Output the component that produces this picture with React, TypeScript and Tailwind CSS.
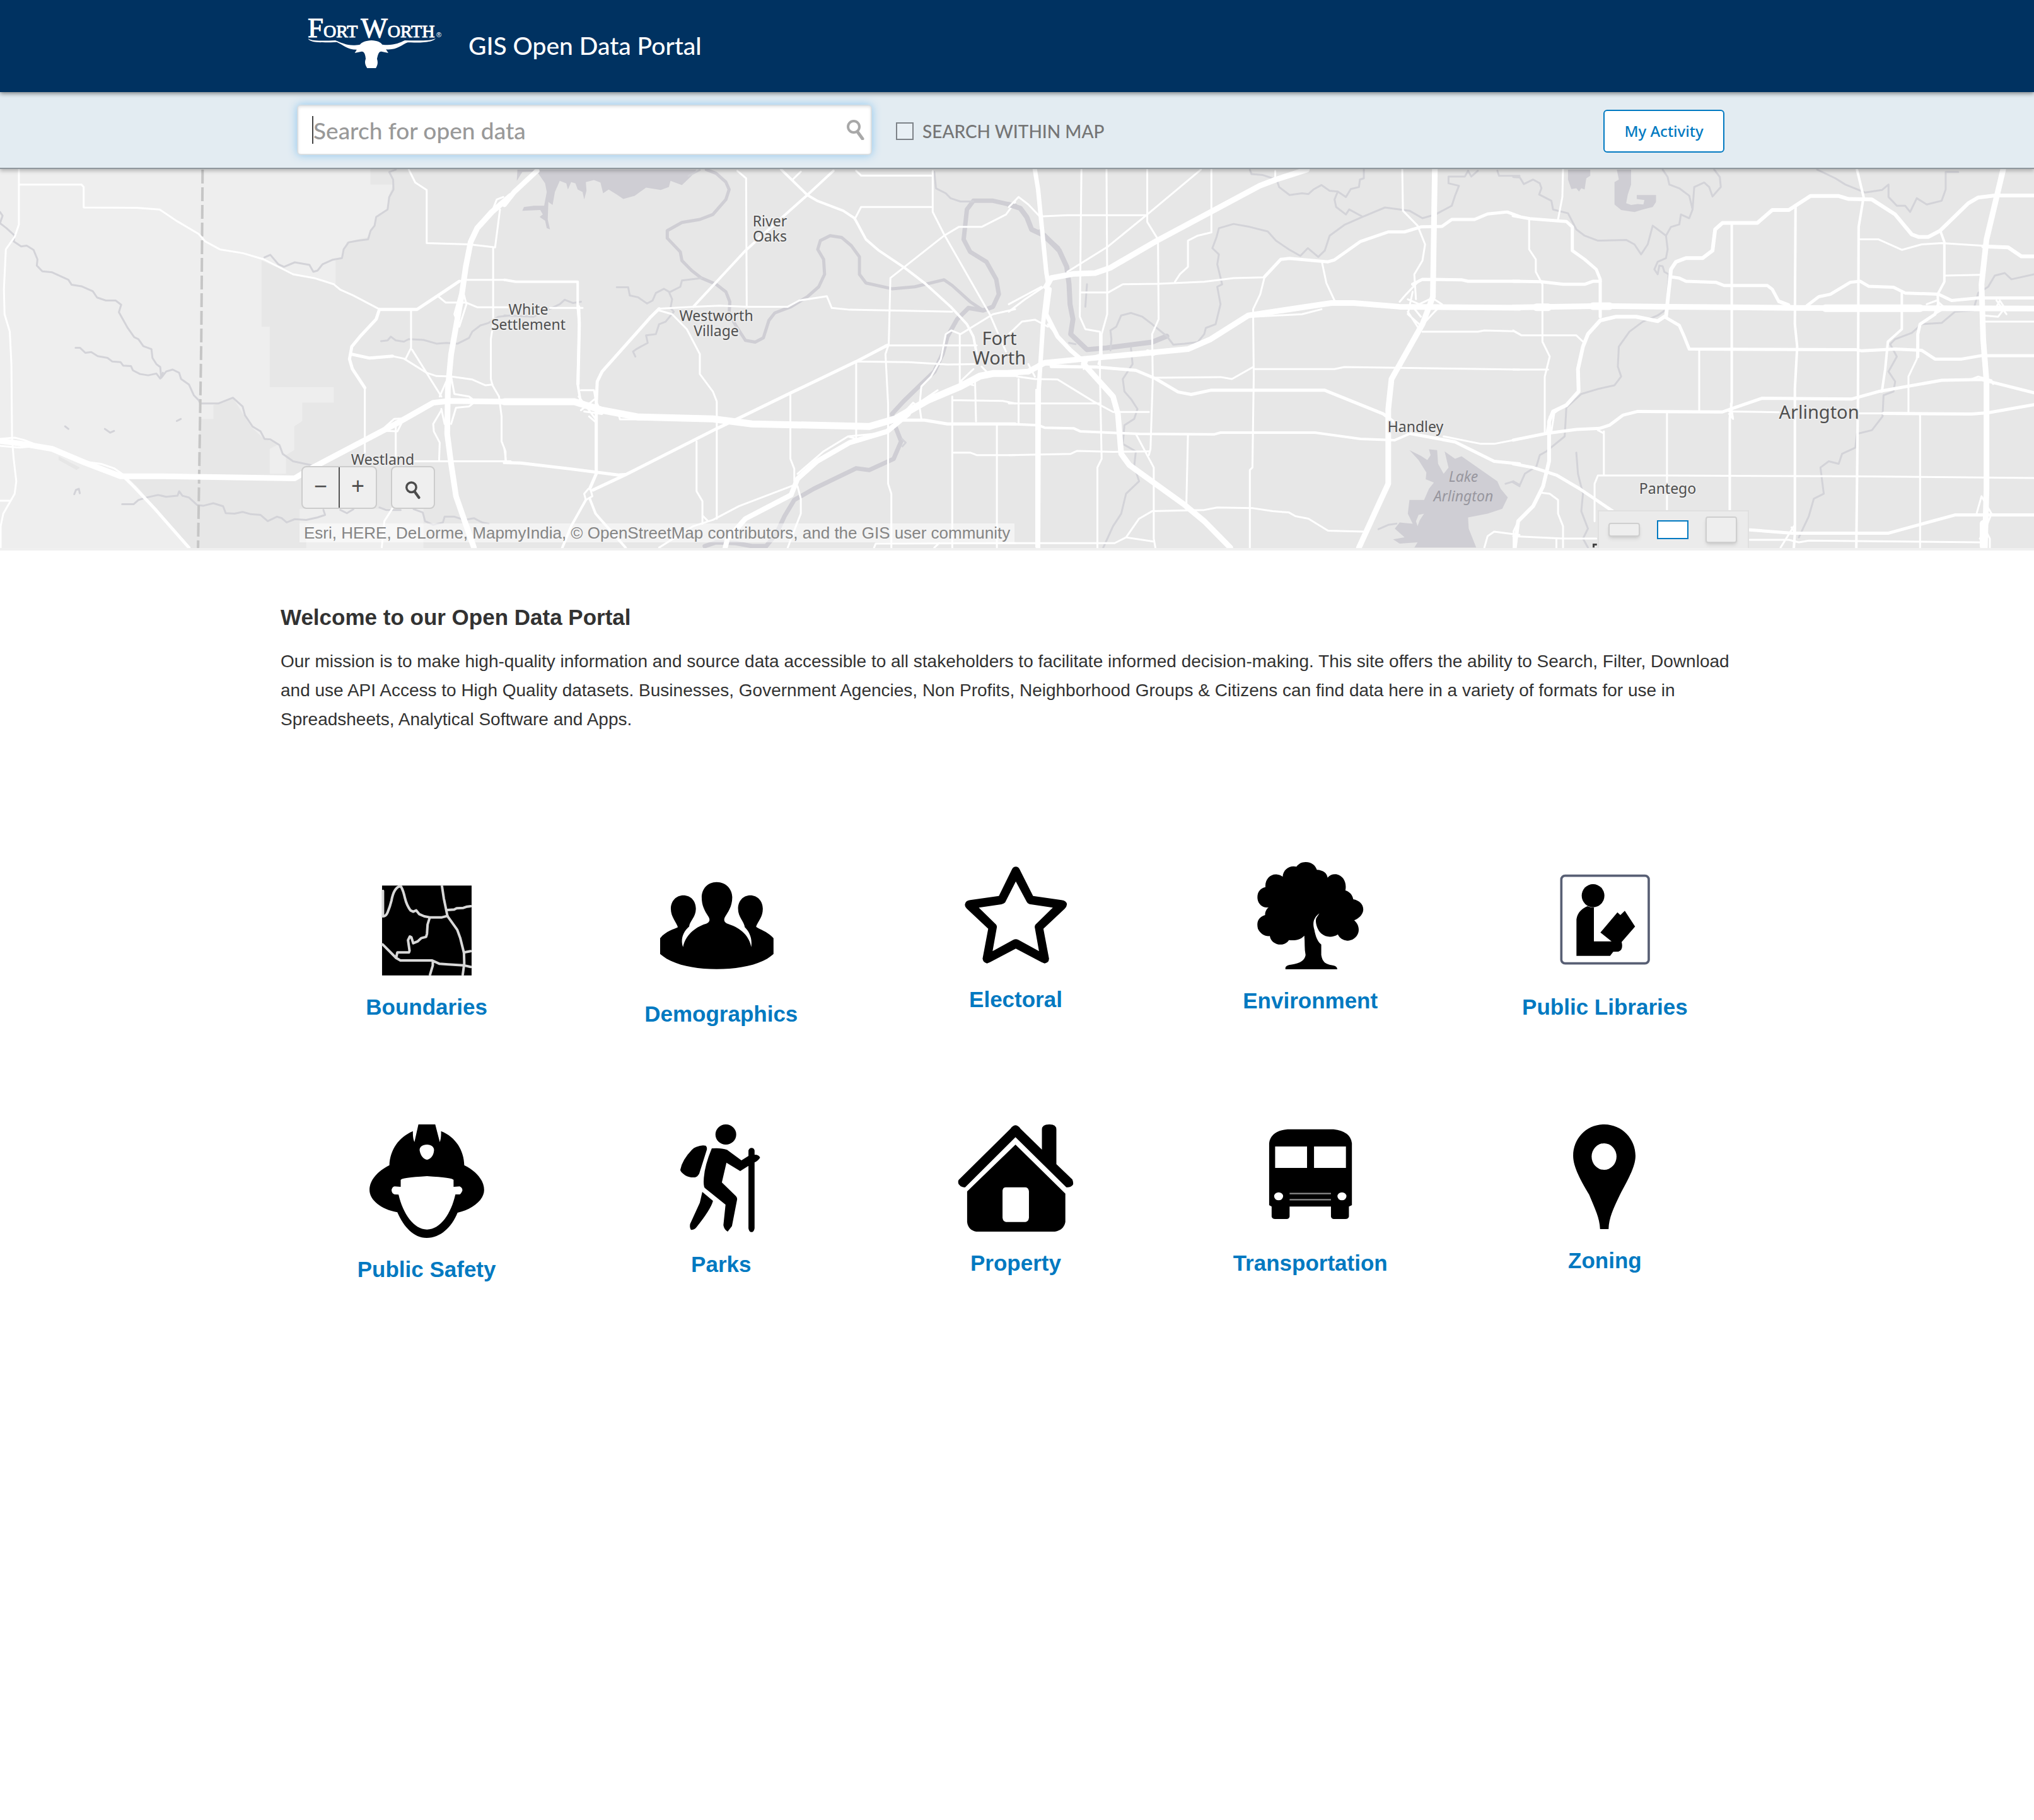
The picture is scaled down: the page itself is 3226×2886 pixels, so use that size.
import type { ReactNode } from 'react'

const SANS = "font-['Liberation_Sans',Arial,sans-serif]"
const LATO = "font-['Lato',sans-serif]"

function Lines({ w, d, c = '#fff' }: { w: number; d: string[]; c?: string }) {
  return (
    <g fill="none" stroke={c} strokeWidth={w} strokeLinejoin="round" strokeLinecap="round">
      {d.map((p, i) => (
        <path key={i} d={p} vectorEffect="non-scaling-stroke" />
      ))}
    </g>
  )
}

/* ---------- basemap, drawn in four side-by-side sheets ---------- */

function SheetWest() {
  return (
    <g transform="translate(0 260) scale(.5166 .3954)">
      <path
        fill="#eeeeee"
        d="M0 0H1137V80H1207L1195 120L1188 180L1155 215L1135 290L1065 310L1050 372L1030 385V480L960 455L900 440L803 385V650H828V893H1025V955H928V1028L903 1050V1145L878 1165V1240H828V1140L858 1120L810 1100L770 1050L715 935L655 965V1020H612V1240H380L420 1290L585 1540H0Z"
      />
      <path fill="#eeeeee" d="M920 1380H1300V1540H940V1440H920Z" />
      <path fill="#e6e6e6" d="M180 1170L245 1215L235 1225L180 1185Z" />
      <Lines
        w={3}
        c="#d3d3d8"
        d={[
          'M0 190L8 205L0 235L20 255L45 285L42 308L65 328L82 325L103 342L115 380L113 405L130 428L160 432L210 462L220 482L250 488L285 508L298 533L325 545L355 545L372 562L365 592L392 655L412 692L425 700L440 728L465 740L468 775L480 800L492 812L495 855L510 830L530 822L550 835L556 860L580 882L595 925L610 945L615 958L670 958L715 935L745 970L752 1005L775 1050L800 1070L812 1100L830 1102L858 1125L868 1160L900 1190L955 1205',
          'M232 735H246L262 755L280 752L300 768L330 775L345 790L370 792L378 806L402 808L408 825L430 840L455 845L480 838L492 858L500 835',
          'M1215 20L1195 30L1207 60L1208 100L1195 130L1190 180L1155 210L1150 245L1138 265L1130 300L1100 305L1070 312L1055 340L1050 375L1020 382L990 400L975 425L962 430L950 402L905 392L872 410L855 400L830 362L812 372',
          'M375 1362H410L425 1345L450 1335L485 1325L510 1332L545 1328L550 1310L560 1328L580 1335L605 1365L625 1368L655 1358L685 1370L693 1398L720 1400L745 1393L770 1402L800 1405L822 1430L850 1412L865 1418L880 1435L905 1422L940 1425L975 1415L998 1405L993 1385',
          'M1170 708L1190 705L1200 690L1215 705L1240 710L1255 700L1300 703L1340 718L1370 715L1405 718L1440 695L1450 670L1475 645L1500 635L1530 610L1568 605',
          'M1045 1385L1065 1398L1085 1382M1165 1375L1185 1385H1230M1270 1382L1298 1395L1305 1430L1330 1445L1360 1435L1365 1412L1395 1412L1425 1425L1455 1418L1480 1435L1500 1440',
          'M200 1050L210 1060M322 1060L338 1075L350 1068M543 1028L555 1020M228 1322L233 1305L242 1300L245 1318',
        ]}
      />
      <path d="M622 20L618 700L608 1540" fill="none" stroke="#c6c6c6" strokeWidth="4" strokeDasharray="22 6" vectorEffect="non-scaling-stroke" />
      <Lines
        w={3}
        d={[
          'M58 20V240L45 290L18 340L12 500L14 600L30 670L35 800L37 1100L42 1180L50 1270L45 1320L10 1400L2 1450V1540',
          'M58 80L250 80L257 90V172L420 173L490 180L545 228L610 278L630 308L675 340L745 355L810 380L900 440L965 455L1025 480L1045 502L1085 525L1165 580H1280L1360 512L1410 468L1430 462H1550L1568 466',
          'M1255 20L1275 72L1310 102V315L1440 320L1520 332L1535 180',
          'M1514 332V640L1507 700V860L1512 885L1532 930L1540 1010V1110L1552 1150V1190',
          'M1345 528L1368 553H1430L1465 572H1568',
          'M1165 580L1155 620L1105 690L1080 730L1073 780L1082 820L1120 895V1160',
          'M1078 760L1135 778L1205 768L1240 778L1310 835L1340 848L1385 850L1450 862L1490 885L1512 882',
          'M1262 582V735L1245 780M1265 742L1355 930',
          'M1215 1030V1180M1355 985L1330 1040L1332 1070L1350 1115L1348 1190',
          'M1270 1190H1568',
          'M0 1348H30M1205 1378L1180 1430L1172 1536',
          'M1385 850L1395 920L1440 930L1460 950L1440 970L1400 975L1385 1040M1355 980L1365 1040M1350 930L1370 870',
          'M0 1100L45 1095L75 1105L120 1128L60 1135L0 1128M250 1190L310 1200L350 1218L395 1258',
          'M1180 1055L1210 1020L1240 1018L1220 1070L1185 1068M1510 190L1525 140L1545 130M1412 520L1395 600L1410 650L1432 560L1420 500',
        ]}
      />
      <Lines w={5} d={['M1165 581H1280L1360 512L1410 468M375 1245L410 1290L475 1380L580 1536M1165 580L1155 620L1105 690L1080 730L1073 780L1082 820L1120 895M1078 760L1135 776L1205 768']} />
      <Lines
        w={9}
        d={[
          'M0 1108L70 1120L160 1140L260 1195L370 1250H500L905 1258L960 1215L1120 1105L1215 1040L1330 955L1380 948L1568 951',
          'M1568 125L1510 190L1465 255L1445 310L1430 410L1418 520L1400 650L1385 760L1375 900L1373 1080L1385 1200L1400 1330L1455 1536',
        ]}
      />
    </g>
  )
}

function SheetCentre() {
  return (
    <g transform="translate(800 260) scale(.5166 .3954)">
      <path
        fill="#cfced4"
        d="M40 20L38 65L55 30L100 28L125 75L130 110L122 165L90 165L60 170L55 185L110 182L118 200L108 210L125 225L130 255L140 260L133 220L135 150L148 162L155 110L170 65L190 75L195 100L205 70L218 75L225 100L240 110L245 140L252 105L250 70L275 62L295 72L303 115L320 100L345 120L365 138L400 125L435 92L480 102L505 90L510 65L545 82L575 45L590 20Z"
      />
      <Lines
        w={5}
        c="#cfced4"
        d={[
          'M620 20L650 35L680 70L690 100L680 140L640 200L600 220L545 232L500 265L500 295L540 350L545 385L575 425L605 455L650 480L680 510L692 550L690 600L715 655L740 705L770 712L795 695L812 625L830 595L880 570L930 530L965 490L983 440L980 380L962 340L970 305L1000 285L1035 292L1065 325L1090 370V440L1110 475L1190 498L1260 490L1350 462L1375 485L1430 550L1470 585',
        ]}
      />
      <Lines
        w={7}
        c="#cfced4"
        d={[
          'M1568 165L1500 145H1440L1420 180L1410 300L1430 350L1480 390L1510 460L1518 520L1500 570L1470 585L1425 575L1390 620L1360 690L1345 760L1320 830L1280 880L1225 950L1190 1000L1200 1050L1218 1110L1195 1180L1120 1225L1080 1218L950 1300L890 1345L860 1410L835 1480L800 1536',
          'M615 1530L650 1515L710 1518L760 1530L800 1530',
        ]}
      />
      <Lines
        w={3}
        c="#d3d3d8"
        d={[
          'M345 492H380L385 525L410 532L438 557L455 545L465 515L490 498L505 510L515 540L510 575L520 590L495 630L475 640L465 680L435 685L440 715L405 740L395 750L402 770',
          'M510 510L540 490L545 465L605 455M0 605L90 610L170 560L185 542L210 555L235 550M1320 30L1325 95L1355 115L1370 135L1400 148L1440 148M1220 1100L1232 1115L1222 1130',
          'M565 45L600 22',
        ]}
      />
      <Lines
        w={3}
        d={[
          'M140 575L240 575M475 578L580 570L660 566L745 570H870L905 545L990 528L1005 575L1060 582L1375 590',
          'M715 25L742 55L744 570',
          'M910 28L885 60',
          'M1080 25L1095 44H1310M1075 220L1095 170H1315M1315 25V190L1350 280L1490 600L1540 750',
          'M1568 150L1540 200L1465 250L1395 250L1350 285L1185 455L1180 720L1170 760L1178 960V1280L1188 1320V1536',
          'M475 585L515 600L560 660L600 760V840L640 910L652 950V1420',
          'M1568 580L1500 600L1400 680L1372 665L1355 680L1340 780L1310 850L1280 890L1275 960M1398 680V900M1170 725H1450M1080 790L1240 792L1360 802L1450 800',
          'M878 915V1180L890 1220V1270M1080 790V1100M590 1110V1310L608 1350V1440',
          'M1375 930V1536M1378 945L1530 948L1568 958M1380 1155H1430L1450 1165H1568M1512 1045V1536M1445 870L1448 1030',
          'M235 905L275 905L282 960M228 930L280 1020M235 985L278 940L300 1000L245 990M260 1010L282 1035M350 1000L355 1022L420 1022M350 990L380 1000',
          'M0 1140L5 1190',
          'M258 1300L245 1320L250 1345L270 1330L265 1305',
          'M890 1285L720 1370L640 1425L580 1450L475 1536M610 1410L625 1430M900 1290L910 1340V1400L895 1450L870 1536',
          'M900 1240L980 1150L1055 1090L1150 1078M1055 1090L1080 1100M1215 1010L1255 955L1275 975L1280 1020M1200 1040L1290 940L1330 905',
          'M1135 1536L1140 1520L1568 1518M1335 1518L1320 1536',
          'M1440 820L1400 870L1440 885M1465 810L1480 830',
        ]}
      />
      <Lines
        w={4}
        d={[
          'M0 462L35 470H225V570L230 640L225 880L235 960',
          'M850 20L930 122L960 145L1040 185L1075 215L1110 300L1150 345L1230 415L1290 475L1370 570L1420 640L1440 690L1450 760',
          'M1010 25L930 122L820 250L740 345L580 570',
          'M250 1345L205 1450L178 1536M262 1340L280 1400L300 1430L372 1536',
        ]}
      />
      <Lines
        w={5}
        d={[
          'M475 578L450 610L300 830L285 870L282 960V1240L262 1300',
          'M1175 725L1080 790L880 915L715 1020L650 1060L370 1245L272 1305',
          'M0 1195L50 1197L200 1220L350 1245L370 1243',
          'M1200 1025H1290L1360 1040H1568',
          'M228 570L230 640L226 880',
        ]}
      />
      <Lines w={8} d={['M678 1536L685 1500L740 1420L880 1325L900 1260L960 1190L1060 1115L1175 1070L1240 1000', 'M0 160L30 110L100 25']} />
      <Lines w={11} d={['M0 951H215L300 985L410 1012L640 1020L760 1040L1120 1050L1200 1020L1300 945L1400 890L1460 848L1500 838H1568']} />
    </g>
  )
}

function SheetEast() {
  return (
    <g transform="translate(1600 260) scale(.5166 .3954)">
      <path
        fill="#cfced4"
        d="M1230 1145L1265 1168L1285 1185L1295 1165L1290 1142L1315 1145L1318 1200L1335 1240L1350 1215L1338 1150L1370 1180L1390 1170L1500 1270L1510 1300L1532 1335L1515 1380L1470 1400L1410 1415L1412 1460L1435 1536H1245L1255 1515L1200 1520L1180 1503L1215 1495L1185 1460L1200 1435L1240 1440L1225 1400L1230 1345L1275 1345L1290 1300L1305 1275L1280 1262L1282 1235L1258 1185Z"
      />
      <path fill="#e7e7e7" d="M1258 1405L1275 1400L1262 1425L1255 1450L1250 1430Z" />
      <Lines w={8} c="#cfced4" d={['M0 160L35 175L55 210L70 260L110 285L155 345L178 410L185 480L188 560L197 620L190 680L240 742L300 735L440 712L485 688', 'M95 270L150 335']} />
      <Lines
        w={3}
        c="#d3d3d8"
        d={[
          'M740 20L745 38L780 42L822 60L830 90L862 122L900 115L920 118L935 100L960 82L985 105L1010 108L1000 140L1005 170L1035 200L1045 180L1085 208M1010 108L1035 130L1050 98L1075 90L1078 60L1090 55V20',
          'M485 688L440 640L410 610L375 595L345 605L330 650L312 665L315 700L312 745M485 688L505 722L540 718L580 712L600 680L605 655L635 640L650 560L640 490L655 480L640 400L645 360L625 335L638 290L645 255L690 238L740 250L795 268L820 305L860 340L895 366L918 335L950 370L970 345L985 285L1030 242L1085 210L1155 172L1230 185L1270 215L1310 200L1360 165L1370 125L1382 85L1350 75V48L1400 48L1410 25L1420 48L1440 25',
          'M375 735L380 800L350 860L355 910L375 940L395 980L385 1020L355 1045L350 1120L390 1150L385 1210L400 1270L360 1320L345 1400L320 1450L290 1536',
          'M1135 1462L1165 1445L1190 1440M1525 1280L1545 1272L1568 1290M1500 25L1505 45H1568M185 715L205 720M240 480L235 570',
        ]}
      />
      <Lines
        w={3}
        d={[
          'M223 20L218 610L235 660L280 670V860L285 1180L272 1215V1536',
          'M300 20L302 440V600L285 680V760',
          'M425 20V230L458 300L460 620L440 680L442 860L435 1140L430 1165',
          'M95 208L180 203H425M590 20L425 200L305 328L180 430M622 20V272L580 285L550 305V410L525 440L510 470',
          'M220 513H305L350 480L460 478L600 470L690 455L785 452L835 380',
          'M785 452L772 520L750 580L752 850L748 1215L740 1225V1536',
          'M962 395L975 475L1000 545',
          'M1208 20L1210 185L1255 245L1278 320L1270 385L1245 440L1250 540',
          'M1270 670H1440L1460 665L1550 668L1568 680M755 820H1000L1030 812L1568 822M450 855L650 852L685 860L750 812',
          'M0 170L30 130L60 160L95 208M0 590L50 540L120 480M0 560L100 490',
          'M0 680L40 630L80 622L120 650M25 850L80 860L150 862L260 950L320 992H430M30 860V1040M0 958H280M0 1165L190 1160L210 1148L320 1152L430 1150',
          'M390 1080L445 1215V1500L450 1536M550 1085L545 1370M360 1495L445 1512M0 1518H325L360 1495L400 1420L440 1390L600 1385L640 1375L750 1378L810 1390L860 1395L880 1410L920 1420L980 1468L1090 1472',
          'M1200 550L1220 520L1260 465M1225 540L1260 560L1300 535L1330 560L1300 600L1265 650M1225 590L1260 660M1240 510L1225 600L1260 640M1265 610L1240 570',
          'M1335 1090L1450 1120L1490 1120L1568 1100M1550 1536V1470L1568 1420M1460 1536L1470 1490L1490 1472L1568 1485',
          'M90 800L235 812M120 640L170 720L220 780M205 760L240 790L230 820M260 770L285 760L275 800M425 745L460 755L440 765M750 610L900 600L960 580M60 800L80 850',
          'M818 25V60',
        ]}
      />
      <Lines w={4} d={['M0 1040L90 1045L110 1055L200 1058L220 1070L400 1080L630 1082L650 1075H940L1080 1100L1185 1105L1230 1080']} />
      <Lines
        w={5}
        d={[
          'M785 450L835 380L862 376L980 390L1000 382L1080 308L1165 270H1215L1265 250L1330 248L1360 220H1430L1470 198L1530 190L1568 208',
          'M1240 480L1270 460L1390 462L1410 468H1568',
          'M130 810L270 812L390 825L450 858L520 912L560 922L620 905H970L1150 1000L1180 1030L1230 1078L1370 1112L1490 1190L1568 1200',
          'M0 838L60 835L95 800',
        ]}
      />
      <Lines w={7} d={['M80 20L90 100L115 430L120 470L105 640L98 780L92 900L90 1536', 'M125 500L115 600L150 690L190 745L230 790']} />
      <Lines
        w={9}
        d={[
          'M915 20L820 60L770 85L620 190L455 305L310 415L265 435L200 438L130 455L115 490',
          'M0 835L60 830L110 795L240 778L430 755L550 740L620 700L735 605L990 555H1060L1200 570L1568 574',
          'M230 800L320 930L335 1000L345 1160L370 1205L540 1365L600 1430L680 1536',
          'M1308 20L1302 530L1270 640L1175 860L1165 980V1280L1140 1350L1075 1536',
        ]}
      />
      <path d="M88 900V1536" stroke="#fff" strokeWidth="7" vectorEffect="non-scaling-stroke" />
    </g>
  )
}

function SheetFarEast() {
  return (
    <g transform="translate(2400 260) scale(.5268 .3954)">
      <path fill="#cfced4" d="M165 20H232V45L220 55L215 100L205 95L198 108L190 95L175 98L165 60ZM312 20H355V80L345 120L340 155L355 162L375 158L392 160L395 142L372 138V122H430V150L420 170L390 180L365 190L325 182L305 160L305 70L318 60Z" />
      <Lines
        w={3}
        c="#d3d3d8"
        d={[
          'M0 50L20 52L32 78L60 60L80 75L85 95L78 120L115 145L120 180L165 195L190 260L215 285L255 305L340 302L365 320L385 360L405 320L420 245L435 260L460 285L465 340L460 375L435 390L425 420L435 440L440 405L450 408L455 430L468 440L462 580L435 605L390 630L350 670L318 730L315 810L325 850L305 885L255 900L205 920L160 975L155 1090L100 1150L80 1165L70 1210L35 1240L20 1285L0 1270',
          'M450 20L465 50L470 80L500 95L530 125L540 180L530 215L505 200L500 240L475 250L460 285M540 180L545 90L575 72L590 90L600 128L625 90L622 50L605 20',
          'M915 20L970 55L1000 80L1060 112L1110 102L1130 80L1130 130L1155 165L1180 165L1195 190L1215 135L1245 160L1290 145L1302 100V30H1340',
          'M1568 440L1500 460L1480 435L1450 445L1430 490L1400 515L1385 585L1330 590L1290 635L1230 640L1200 675L1150 700L1135 720L1155 770L1130 830L1150 870L1145 910L1115 925L1112 1010L1080 1065L1035 1080L1030 1135L990 1160L980 1200L950 1190L925 1215L935 1320L905 1340L890 1410L860 1495',
          'M190 1155L195 1240L210 1320L205 1390L225 1460L210 1500L225 1536',
        ]}
      />
      <Lines
        w={3}
        d={[
          'M150 20L148 130L135 220M48 220V340L68 380V430L88 480V710L110 770L95 850V1080',
          'M0 822H105M0 665L25 685H190L210 710',
          'M1040 300H1100L1170 342L1230 320L1290 315L1410 325',
          'M1300 445L1410 442M1415 630H1568',
          'M1190 995V850L1215 780L1220 660',
          'M560 742V990M463 990V1385M1225 1003V1536M273 1070V1245M255 1065L273 1078',
          'M245 1430V1280L255 1247H460L1020 1250L1568 1257',
          'M650 990L800 993M1040 998L1190 998',
          'M0 1490L150 1500H250M80 1315L110 1320L135 1345V1400L150 1450V1536M130 1500V1536M712 1505L830 1505L860 1515L890 1508L1405 1515M845 1450L805 1536M838 1455L850 1480',
          'M100 1080L110 1010L150 970M125 985L115 1070M655 960L662 1020L650 1000M800 545L830 560',
          'M1245 560L1275 545L1300 575L1275 595M1455 570L1465 545L1480 575L1460 610L1415 605M1395 1400L1410 1330L1440 1400L1425 1450M1405 1500L1420 1460L1435 1500V1536M1380 860L1400 850L1440 865L1445 880M1455 545L1485 600',
        ]}
      />
      <Lines
        w={4}
        d={[
          'M658 235V950L652 1020V1385M850 170L848 640L855 730L848 900V1480L845 1536',
          'M1035 20L1055 130L1040 250L1038 930L1033 1536',
          'M1285 262L1298 310V470L1278 520L1280 580',
          'M1170 515V660L1128 710L1120 820L1110 910',
        ]}
      />
      <Lines
        w={5}
        d={[
          'M0 205L50 217L160 228L178 250V345L215 380L250 420L262 460V610',
          'M0 468L85 470L150 480H215L240 468H262M475 450L500 455L520 468L610 472L635 485H765L780 500L800 550L830 565',
          'M885 565L920 530L955 520L1015 472L1045 468L1070 488L1145 492L1180 515L1280 520L1320 545L1400 535L1568 535',
          'M455 610L500 645L515 690L530 740L1030 742L1050 747L1150 740L1230 745L1270 780H1350L1410 766H1568',
          'M0 1105L100 1078L190 1062L260 1058L290 1045L330 1005L375 990L630 992L660 978L750 937L1020 940L1100 910L1290 865L1410 862L1568 915',
          'M1115 998L1380 1000L1430 995L1568 963',
          'M0 1200L60 1215L130 1245L200 1300L300 1390M712 1465L840 1478H1130L1220 1445L1330 1405H1568',
          'M1280 560L1270 600L1225 640L1218 680V770',
        ]}
      />
      <Lines
        w={6}
        d={[
          'M460 610L475 420L490 390L520 375H570L600 345L608 260L630 234H735L780 182H830L895 126H980L1010 138L1080 140L1150 200L1200 280L1220 290H1250L1285 265L1370 155L1400 132L1450 124H1568',
          'M455 610L435 628L370 610L310 610L262 625L225 680L210 730L195 820L197 910L160 965L120 990L108 1030V1190L90 1290L60 1370L15 1430L5 1536',
          'M1415 328L1490 332L1530 368H1568',
        ]}
      />
      <Lines w={9} d={['M0 573L265 567L470 570L660 572L850 575L1568 577', 'M1475 20L1425 300L1410 480L1415 700L1425 870V1300L1420 1536']} />
      <Lines w={12} d={['M240 568H290M70 572H105M940 576H1225', 'M1416 1440V1530']} />
      <path d="M242 1536V1524H252" fill="none" stroke="#444" strokeWidth="3" vectorEffect="non-scaling-stroke" />
    </g>
  )
}

type Place = { x: number; y: number; size: number; lead: number; lines: string[] }

const places: Place[] = [
  { x: 1221, y: 358, size: 23, lead: 24, lines: ['River', 'Oaks'] },
  { x: 838, y: 498, size: 23, lead: 24, lines: ['White', 'Settlement'] },
  { x: 1136, y: 508, size: 23, lead: 24, lines: ['Westworth', 'Village'] },
  { x: 1585, y: 546, size: 29, lead: 31, lines: ['Fort', 'Worth'] },
  { x: 607, y: 736, size: 23, lead: 24, lines: ['Westland'] },
  { x: 2245, y: 684, size: 23, lead: 24, lines: ['Handley'] },
  { x: 2885, y: 663, size: 29, lead: 31, lines: ['Arlington'] },
  { x: 2645, y: 782, size: 23, lead: 24, lines: ['Pantego'] },
]

function Basemap() {
  return (
    <svg viewBox="0 267 3226 601" preserveAspectRatio="xMidYMid slice" className="h-[601px] w-full" aria-label="Map of Fort Worth">
      <rect x="0" y="266" width="3226" height="603" fill="#e7e7e7" />
      <SheetWest />
      <SheetCentre />
      <SheetEast />
      <SheetFarEast />
      <g className="font-['Noto_Sans',sans-serif]" textAnchor="middle" fill="#4f4f4f">
        {places.map((p) => (
          <text key={p.lines[0]} y={p.y} fontSize={p.size} stroke="#ececec" strokeWidth="4" strokeLinejoin="round" paintOrder="stroke">
            {p.lines.map((line, i) => (
              <tspan key={line} x={p.x} dy={i === 0 ? 0 : p.lead}>
                {line}
              </tspan>
            ))}
          </text>
        ))}
        <text y="763" fontStyle="italic" fontSize="23" fill="#98979f">
          <tspan x="2321">Lake</tspan>
          <tspan x="2321" dy="31">
            Arlington
          </tspan>
        </text>
      </g>
    </svg>
  )
}

/* ---------- small glyphs ---------- */

function Magnifier({ className }: { className: string }) {
  return (
    <svg viewBox="0 0 28 32" className={className} fill="none" stroke="currentColor" aria-hidden="true">
      <ellipse cx="11" cy="11" rx="9" ry="9" strokeWidth="4" />
      <path d="M17 19L25 30" strokeWidth="5" strokeLinecap="round" />
    </svg>
  )
}

function Logo() {
  return (
    <svg viewBox="488 20 216 96" className="h-24 w-[216px]" fill="#fff" role="img" aria-label="Fort Worth">
      <text x="488" y="59" fontSize="45" stroke="#fff" className="font-['Liberation_Serif',serif]">
        F<tspan fontSize="28">ORT</tspan>
        <tspan fontSize="20"> </tspan>W<tspan fontSize="28">ORTH</tspan>
      </text>
      <text x="692" y="59" fontSize="11" className={SANS}>®</text>
      <g transform="translate(440 0) scale(.4592 .3333)">
        <path d="M106 182C112 194 150 196 200 192C225 205 245 222 285 212C292 200 305 194 325 192C345 194 356 200 362 212C400 218 420 205 440 192C490 194 535 194 546 182C540 200 500 204 450 202C430 212 412 240 375 235L383 252L362 246C350 240 347 260 344 280C348 300 346 310 340 324H310C304 310 300 300 305 280C304 262 300 240 288 246L267 252L274 236C240 236 226 212 205 200C150 204 108 202 106 182Z" />
      </g>
    </svg>
  )
}

/* ---------- categories ---------- */

type Category = { label: string; height: string; viewBox: string; transform: string; art: ReactNode }

const T7 = 'translate(540 1340) scale(.4847 .3333)'
const T8 = 'translate(1440 1340) scale(.4974 .3333)'
const T10 = 'translate(540 1750) scale(.4847 .3333)'
const T11 = 'translate(1440 1750) scale(.7908 .3333)'

const categories: Category[] = [
  {
    label: 'Boundaries',
    height: 'h-[180px]',
    viewBox: '576 1366 200 180',
    transform: T7,
    art: (
      <>
        <path d="M134 190H427V617H134Z" />
        <Lines
          w={4}
          c="#d8d8d8"
          d={[
            'M137 215V330M136 336Q146 338 152 318Q160 290 165 260Q172 205 190 194H196Q204 215 209 250Q215 285 227 308L236 314L246 308L256 326L272 336L290 341H330L348 334',
            'M330 192L336 250L348 335L380 400L390 440L402 510L403 560L398 614',
            'M348 306L370 304L378 298L400 296L412 290L424 288M402 508L424 502',
            'M290 342L283 375L281 420L278 434L262 440L250 456L236 464L230 436L225 432L219 450L224 500L222 508H184L180 534',
            'M136 470L180 534L194 546H298L322 562L350 565L400 569L424 577M300 550V570L291 614',
          ]}
        />
      </>
    ),
  },
  {
    label: 'Demographics',
    height: 'h-[191px]',
    viewBox: '1044 1366 200 191',
    transform: T7,
    art: (
      <path d="M1231 173C1262 173 1282 208 1282 245C1282 290 1268 315 1258 340C1252 358 1258 368 1272 374C1310 392 1338 430 1344 482C1348 440 1338 410 1323 388C1321 360 1301 340 1301 300C1301 262 1318 236 1341 236C1364 236 1382 262 1382 300C1382 340 1366 360 1360 385C1366 397 1392 402 1417 440V515C1380 565 1310 587 1231 587C1152 587 1085 565 1046 515V440C1066 405 1092 398 1104 388C1100 365 1081 340 1081 300C1081 262 1099 236 1122 236C1146 236 1163 262 1163 300C1163 340 1142 360 1141 385C1120 410 1112 450 1121 482C1128 430 1158 388 1195 372C1210 364 1210 350 1203 335C1192 310 1182 285 1182 245C1182 208 1200 173 1231 173Z" />
    ),
  },
  {
    label: 'Electoral',
    height: 'h-[168px]',
    viewBox: '1512 1366 200 168',
    transform: T8,
    art: (
      <path
        fillRule="evenodd"
        d="M346 100Q354 100 358 112L401 239L492 259Q508 262 509 280Q508 292 502 300L434 395L452 538Q452 556 438 560L428 554L346 490L264 554L254 560Q242 556 240 538L258 395L190 300Q182 288 184 278Q186 262 200 259L292 239L334 112Q338 100 346 100ZM346 170L312 270Q308 276 300 279L228 295L283 375Q287 383 285 393L272 502L338 448Q346 442 354 448L420 502L407 393Q405 383 409 375L464 295L390 278Q383 275 381 268Z"
      />
    ),
  },
  {
    label: 'Environment',
    height: 'h-[170px]',
    viewBox: '1980 1366 200 170',
    transform: T8,
    art: (
      <path d="M1272 78C1292 78 1304 95 1308 115C1328 116 1341 132 1342 152C1350 138 1360 134 1370 136C1392 142 1404 175 1399 213C1412 218 1422 235 1424 255C1444 260 1456 280 1456 303C1456 325 1444 345 1427 355C1440 372 1444 395 1440 415C1434 440 1420 452 1405 452C1392 450 1380 440 1375 422C1358 438 1338 438 1322 418C1308 398 1302 362 1306 345L1316 322C1296 345 1294 370 1300 400C1304 435 1312 460 1322 470V520C1325 550 1334 562 1350 567C1366 570 1373 575 1373 588H1208C1206 576 1212 568 1225 566C1255 560 1270 545 1272 520C1268 490 1270 460 1268 428C1256 448 1238 452 1219 449C1210 468 1198 472 1186 470C1170 466 1160 450 1158 430C1142 432 1128 420 1120 395C1114 360 1124 338 1143 330C1142 315 1148 300 1154 293C1136 298 1122 280 1119 255C1116 225 1126 202 1144 197C1142 160 1160 132 1182 137C1190 138 1196 144 1199 148C1200 115 1220 92 1243 100C1250 85 1260 78 1272 78Z" />
    ),
  },
  {
    label: 'Public Libraries',
    height: 'h-[180px]',
    viewBox: '2448 1366 200 180',
    transform: 'translate(2380 1340) scale(.3333)',
    art: (
      <>
        <rect x="298" y="143" width="416" height="417" rx="18" fill="#fff" stroke="#585f74" strokeWidth="11" />
        <ellipse cx="449" cy="238" rx="54" ry="55" />
        <path d="M422 288Q440 296 453 294V455H537L484 413L565 317L579 330L600 310L649 385L585 458Q594 496 570 504L545 505L530 524H370V350Q376 308 422 288Z" />
      </>
    ),
  },
  {
    label: 'Public Safety',
    height: 'h-[180px]',
    viewBox: '576 1782 200 180',
    transform: T10,
    art: (
      <path
        fillRule="evenodd"
        d="M253 96H308L323 180Q328 160 327 128C375 155 402 220 403 290C445 320 468 365 468 408C468 455 430 500 381 516C362 585 325 636 280 636C238 636 205 585 184 514C130 500 93 455 93 408C93 360 120 318 158 290C160 215 190 155 235 128Q234 160 240 180ZM281 192C265 192 256 205 257 220C260 245 270 262 281 264C292 262 303 245 304 220C305 205 296 192 281 192ZM195 360Q196 350 281 342Q366 350 368 360V393L388 391Q397 397 397 410Q393 425 388 429H374C360 520 325 596 281 596C238 596 202 520 188 430L175 429Q166 425 165 408Q168 392 175 391L195 393Z"
      />
    ),
  },
  {
    label: 'Parks',
    height: 'h-[172px]',
    viewBox: '1044 1782 200 172',
    transform: T10,
    art: (
      <>
        <ellipse cx="1261" cy="144" rx="34" ry="48" />
        <path d="M1164 203Q1182 192 1195 197Q1200 203 1199 215L1174 330Q1168 346 1160 348Q1142 350 1128 338Q1112 322 1112 312Q1118 265 1150 217Q1156 206 1164 203Z" />
        <path d="M1215 210Q1245 206 1265 217L1312 267L1335 246V220Q1338 208 1345 208Q1353 208 1355 220V240Q1370 240 1373 254Q1366 270 1355 277V590Q1353 608 1345 608Q1337 608 1335 590V293L1308 318L1263 278L1248 372L1291 433Q1298 441 1298 452L1281 580L1267 606Q1255 595 1253 575L1260 478L1192 398Q1187 388 1189 350Q1192 290 1215 210Z" />
        <path d="M1184 417L1219 460Q1212 500 1165 585Q1158 598 1147 598Q1142 588 1144 570L1176 468Z" />
      </>
    ),
  },
  {
    label: 'Property',
    height: 'h-[170px]',
    viewBox: '1512 1782 200 170',
    transform: T11,
    art: (
      <>
        <path d="M217 100Q223 102 227 116L270 216V120Q270 96 285 96Q299 96 299 120V285L331 358Q334 375 332 384Q326 398 319 395L217 157L116 395Q109 398 103 380Q101 368 103 360L207 116Q211 102 217 100Z" />
        <path fillRule="evenodd" d="M217 192L317 425V560Q314 598 296 606H138Q122 598 120 560V415ZM197 395Q191 396 191 415V540Q192 558 198 560H237Q243 558 244 540V415Q243 396 237 395Z" />
      </>
    ),
  },
  {
    label: 'Transportation',
    height: 'h-[170px]',
    viewBox: '1980 1782 200 170',
    transform: T11,
    art: (
      <>
        <path
          fillRule="evenodd"
          d="M764 119H856Q890 128 893 185V480L887 487V535Q886 546 880 546H857Q852 546 851 535V487H768V535Q767 546 762 546H739Q733 546 732 535V487L727 480V185Q730 128 764 119ZM739 201V303H803V201ZM817 201V303H881V201Z"
        />
        <ellipse cx="746" cy="438" rx="9" ry="19" fill="#fff" />
        <ellipse cx="873" cy="438" rx="9" ry="19" fill="#fff" />
        <path d="M768 425H851M768 454H851" stroke="#8a8a8a" strokeWidth="7" />
      </>
    ),
  },
  {
    label: 'Zoning',
    height: 'h-[166px]',
    viewBox: '2448 1782 200 166',
    transform: T11,
    art: (
      <path
        fillRule="evenodd"
        d="M1400 96C1436 96 1463 165 1463 245C1463 300 1446 365 1432 430C1418 500 1410 540 1409 594H1392C1391 540 1382 500 1370 430C1354 365 1338 300 1338 245C1338 165 1364 96 1400 96ZM1400 186A25 63 0 1 0 1400 312A25 63 0 1 0 1400 186Z"
      />
    ),
  },
]

export default function App() {
  return (
    <div className={`min-h-screen bg-white ${SANS}`}>
      <header className="relative z-20 h-[146px] bg-[#003261] shadow-[0_2px_7px_rgba(0,0,0,0.5)]">
        <div className="mx-auto flex max-w-[2340px] items-start gap-[39px] pt-5 pl-[45px]">
          <Logo />
          <h1 className={`pt-7 text-[39px] leading-[48px] font-medium text-white ${LATO}`}>GIS Open Data Portal</h1>
        </div>
      </header>

      <div className="relative z-10 h-[122px] border-b-2 border-[#8f979d] bg-[#e3ecf2] shadow-[0_3px_6px_rgba(0,0,0,0.25)]">
        <form className={`mx-auto flex h-full max-w-[2340px] items-center pr-[48px] pl-[28px] ${LATO}`}>
          <div className="relative w-[912px]">
            <input
              type="search"
              aria-label="Search for open data"
              placeholder="Search for open data"
              className="h-[80px] w-full rounded-md border-2 border-[#d8dee2] bg-white px-6 text-[37px] font-medium shadow-[0_0_14px_rgba(120,190,240,0.8),inset_0_2px_4px_rgba(0,0,0,0.1)] outline-none placeholder:text-[#999999]"
            />
            <span className="absolute top-[18px] left-6 h-[44px] w-[2px] bg-[#444444]" />
            <button type="submit" aria-label="Search" className="absolute top-6 right-3 text-[#a8a8a8]">
              <Magnifier className="h-8 w-7" />
            </button>
          </div>
          <label className="mt-1 ml-[38px] flex items-center gap-[14px] text-[28px] font-medium text-[#757575]">
            <input type="checkbox" className="size-7 appearance-none border-2 border-[#7d8288] bg-[#e9f0f5]" />
            SEARCH WITHIN MAP
          </label>
          <button type="button" className="mt-1 ml-auto h-[68px] w-[192px] rounded-md border-2 border-[#0079c1] bg-white font-['Noto_Sans',sans-serif] text-[24px] font-medium text-[#0079c1]">
            My Activity
          </button>
        </form>
      </div>

      <section className="relative border-b-[4px] border-[#f0f0f0]">
        <Basemap />
        <div className="absolute inset-x-0 bottom-0 mx-auto flex max-w-[2340px] items-end justify-between pr-[9px] pl-8">
          <div className="pb-[9px]">
            <div className="flex gap-[22px] pl-[3px] text-[#4c4c4c]">
              <div className="flex h-[68px] w-[120px] rounded-lg border-2 border-[#cccccc] bg-[#efefef]">
                <button type="button" aria-label="Zoom out" className="flex-1 border-r-2 border-[#555555] pb-1 text-[36px] leading-none">
                  −
                </button>
                <button type="button" aria-label="Zoom in" className="flex-1 pb-1 text-[36px] leading-none">
                  +
                </button>
              </div>
              <button type="button" aria-label="Find place" className="flex h-[68px] w-[70px] items-center justify-center rounded-lg border-2 border-[#cccccc] bg-[#efefef] pt-2">
                <Magnifier className="h-[30px] w-6" />
              </button>
            </div>
            <p className="mt-[23px] bg-white/50 px-[7px] text-[26px] leading-[30px] text-[#858585]">
              Esri, HERE, DeLorme, MapmyIndia, © OpenStreetMap contributors, and the GIS user community
            </p>
          </div>
          <div className="flex h-[60px] w-[240px] items-center gap-[27px] border-2 border-b-0 border-[#e0e0e0] bg-[#ebebeb] pl-[15px]">
            <button type="button" aria-label="Small map" className="h-[22px] w-[50px] rounded-sm border-2 border-[#cfcfcf] bg-[#eeeeee] shadow-md" />
            <button type="button" aria-label="Medium map" className="h-[30px] w-[50px] border-2 border-[#0079c1] bg-white" />
            <button type="button" aria-label="Large map" className="h-[42px] w-[50px] rounded-sm border-2 border-[#cfcfcf] bg-[#eeeeee] shadow-md" />
          </div>
        </div>
      </section>

      <main className="mx-auto max-w-[2340px] pt-[86px]">
        <div className="pl-0.5 text-[#323232]">
          <h2 className="text-[35px] leading-10 font-bold">Welcome to our Open Data Portal</h2>
          <p className="mt-[27px] text-[28px] leading-[46px]">
            Our mission is to make high-quality information and source data accessible to all stakeholders to facilitate informed decision-making. This site offers the ability to Search, Filter, Download and use API Access to High Quality datasets. Businesses, Government Agencies, Non Profits, Neighborhood Groups &amp; Citizens can find data here in a variety of formats for use in Spreadsheets, Analytical Software and Apps.
          </p>
        </div>
        <nav aria-label="Categories" className="mt-[203px] grid grid-cols-5 gap-y-[155px] pr-1">
          {categories.map((c) => (
            <a key={c.label} href="#" className="flex flex-col items-center gap-[30px] text-[35px] leading-10 font-bold text-[#0079c1]">
              <svg viewBox={c.viewBox} className={`w-[200px] ${c.height}`} fill="#000" aria-hidden="true">
                <g transform={c.transform}>{c.art}</g>
              </svg>
              {c.label}
            </a>
          ))}
        </nav>
      </main>
    </div>
  )
}
